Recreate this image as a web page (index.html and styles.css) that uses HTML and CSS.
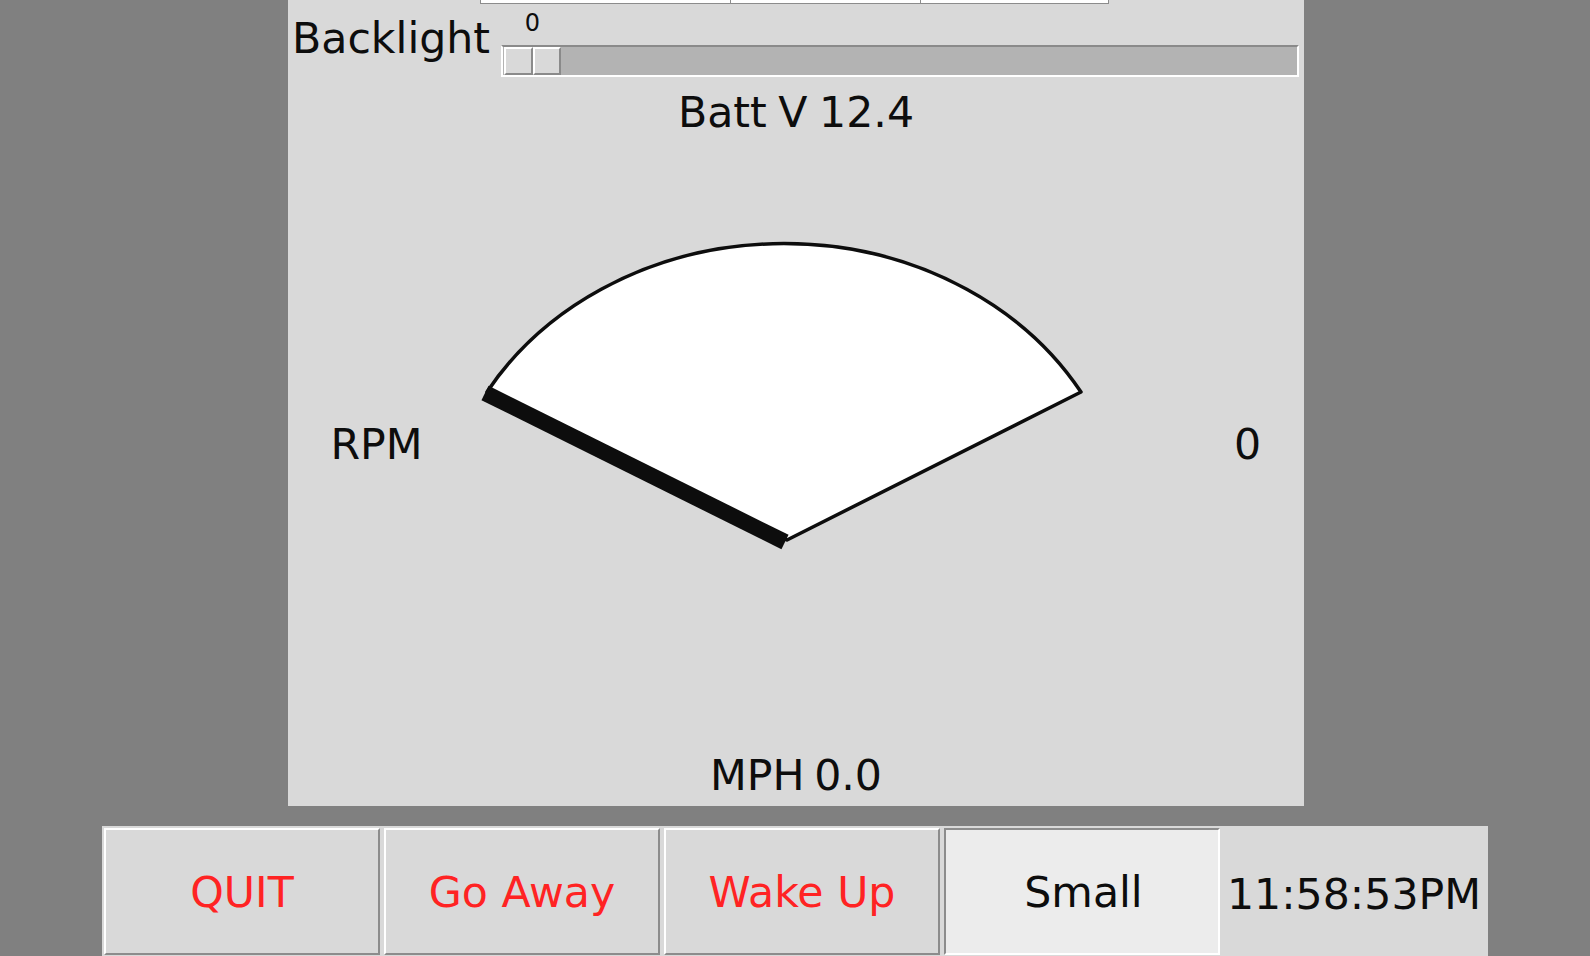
FILE: index.html
```html
<!DOCTYPE html>
<html>
<head>
<meta charset="utf-8">
<title>Dash</title>
<link rel="stylesheet" href="styles.css">
</head>
<body>
<div class="panel">
  <div class="topbox"><span class="cell cell-a"></span><span class="cell cell-b"></span><span class="cell cell-c"></span></div>
  <div class="backlight-row">
    <div class="bl-label">Backlight</div>
    <div class="scale">
      <div class="scale-value">0</div>
      <div class="trough"><div class="knob"><span class="knob-half"></span><span class="knob-half"></span></div></div>
    </div>
  </div>
  <div class="batt">Batt V 12.4</div>
  <div class="gauge-row">
    <div class="side-label">RPM</div>
    <svg class="gauge" width="726" height="613" viewBox="465 137 726 613" xmlns="http://www.w3.org/2000/svg">
      <path d="M787 540 L487 392 A343 297 0 0 1 1081 392 Z" fill="#ffffff" stroke="#0d0d0d" stroke-width="3.5" stroke-linejoin="round"/>
      <line x1="485" y1="393" x2="785" y2="542" stroke="#0d0d0d" stroke-width="16"/>
    </svg>
    <div class="side-label">0</div>
  </div>
  <div class="mph">MPH 0.0</div>
</div>
<div class="buttonbar">
  <div class="btn btn-red">QUIT</div>
  <div class="btn btn-red">Go Away</div>
  <div class="btn btn-red">Wake Up</div>
  <div class="btn btn-active">Small</div>
  <div class="clock">11:58:53PM</div>
</div>
</body>
</html>
```
FILE: styles.css
```css
html, body {
  margin: 0;
  padding: 0;
}
body {
  width: 1590px;
  height: 956px;
  overflow: hidden;
  background: #808080;
  font-family: "DejaVu Sans", "Noto Sans", sans-serif;
  color: #0d0d0d;
}
.panel {
  margin-left: 288px;
  width: 1016px;
  height: 806px;
  background: #d9d9d9;
  display: flex;
  flex-direction: column;
  box-sizing: border-box;
}
.topbox {
  margin-left: 192px;
  width: 629px;
  height: 4px;
  display: flex;
  box-sizing: border-box;
  border: 1px solid #8c8c8c;
  border-top: none;
  background: #ffffff;
}
.cell {
  height: 3px;
  box-sizing: border-box;
}
.cell-a { width: 250px; border-right: 1px solid #8c8c8c; }
.cell-b { width: 190px; border-right: 1px solid #8c8c8c; }
.cell-c { flex: 1; }
.backlight-row {
  height: 76px;
  display: flex;
}
.bl-label {
  width: 209px;
  padding-left: 4px;
  margin-top: 9px;
  font-size: 42.67px;
  line-height: 50px;
  height: 50px;
}
.scale {
  width: 798px;
  padding-top: 7px;
  display: flex;
  flex-direction: column;
}
.scale-value {
  width: 63px;
  text-align: center;
  font-size: 24px;
  line-height: 24px;
  height: 24px;
}
.trough {
  margin-top: 10px;
  height: 32px;
  box-sizing: border-box;
  background: #b3b3b3;
  border-top: 2px solid #8a8a8a;
  border-left: 2px solid #ffffff;
  border-right: 2px solid #ffffff;
  border-bottom: 2px solid #ffffff;
  padding-left: 1px;
  display: flex;
}
.knob {
  width: 57px;
  height: 28px;
  display: flex;
}
.knob-half {
  flex: 1;
  box-sizing: border-box;
  background: #d9d9d9;
  border-top: 2px solid #ffffff;
  border-left: 2px solid #ffffff;
  border-bottom: 2px solid #8a8a8a;
  border-right: 2px solid #8a8a8a;
}
.batt {
  margin-top: 7px;
  text-align: center;
  font-size: 42.67px;
  line-height: 50px;
  height: 50px;
  word-spacing: -2px;
}
.gauge-row {
  height: 613px;
  display: grid;
  grid-template-columns: 177px 726px 113px;
  align-items: center;
}
.gauge {
  display: block;
}
.side-label {
  text-align: center;
  font-size: 42.67px;
  line-height: 50px;
}
.mph {
  text-align: center;
  font-size: 42.67px;
  line-height: 50px;
  height: 50px;
  word-spacing: -4px;
}
.buttonbar {
  margin-left: 102px;
  margin-top: 20px;
  width: 1386px;
  height: 130px;
  box-sizing: border-box;
  background: #d9d9d9;
  padding: 2px 0 0 2px;
  display: flex;
  align-items: flex-start;
}
.btn {
  width: 276px;
  height: 127px;
  box-sizing: border-box;
  margin-right: 4px;
  background: #d9d9d9;
  border-top: 2px solid #ffffff;
  border-left: 2px solid #ffffff;
  border-bottom: 2px solid #8c8c8c;
  border-right: 2px solid #8c8c8c;
  display: flex;
  align-items: center;
  justify-content: center;
  padding-top: 0;
  font-size: 42.67px;
  line-height: 50px;
}
.btn-red {
  color: #ff2323;
}
.btn-active {
  margin-right: 0;
  background: #ececec;
  color: #0d0d0d;
  padding-left: 3px;
  border-top: 2px solid #8c8c8c;
  border-left: 2px solid #8c8c8c;
  border-bottom: 2px solid #ffffff;
  border-right: 2px solid #ffffff;
}
.clock {
  width: 268px;
  height: 127px;
  display: flex;
  align-items: center;
  justify-content: center;
  padding-top: 4px;
  box-sizing: border-box;
  font-size: 42.67px;
  line-height: 50px;
}
```
